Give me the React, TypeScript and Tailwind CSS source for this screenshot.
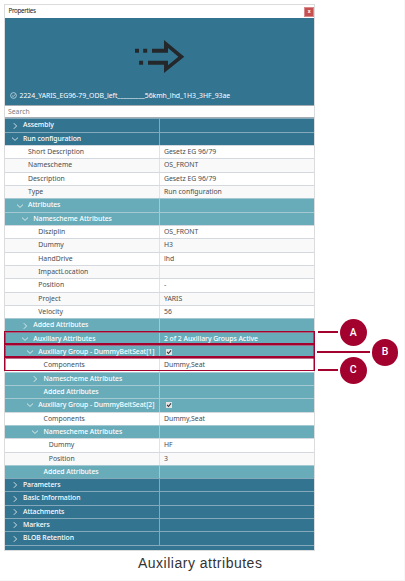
type Row = {
  label: string;
  depth: number;
  tone: "dark" | "teal" | "plain" | "alt";
  arrow?: "open" | "closed";
  value?: string;
  checked?: boolean;
};

const rows: Row[] = [
  { label: "Assembly", depth: 0, tone: "dark", arrow: "closed" },
  { label: "Run configuration", depth: 0, tone: "dark", arrow: "open" },
  { label: "Short Description", depth: 1, tone: "plain", value: "Gesetz EG 96/79" },
  { label: "Namescheme", depth: 1, tone: "alt", value: "OS_FRONT" },
  { label: "Description", depth: 1, tone: "plain", value: "Gesetz EG 96/79" },
  { label: "Type", depth: 1, tone: "alt", value: "Run configuration" },
  { label: "Attributes", depth: 1, tone: "teal", arrow: "open" },
  { label: "Namescheme Attributes", depth: 2, tone: "teal", arrow: "open" },
  { label: "Disziplin", depth: 3, tone: "plain", value: "OS_FRONT" },
  { label: "Dummy", depth: 3, tone: "alt", value: "H3" },
  { label: "HandDrive", depth: 3, tone: "plain", value: "lhd" },
  { label: "ImpactLocation", depth: 3, tone: "alt" },
  { label: "Position", depth: 3, tone: "plain", value: "-" },
  { label: "Project", depth: 3, tone: "alt", value: "YARIS" },
  { label: "Velocity", depth: 3, tone: "plain", value: "56" },
  { label: "Added Attributes", depth: 2, tone: "teal", arrow: "closed" },
  { label: "Auxiliary Attributes", depth: 2, tone: "teal", arrow: "open", value: "2 of 2 Auxiliary Groups Active" },
  { label: "Auxiliary Group - DummyBeltSeat[1]", depth: 3, tone: "teal", arrow: "open", checked: true },
  { label: "Components", depth: 4, tone: "plain", value: "Dummy,Seat" },
  { label: "Namescheme Attributes", depth: 4, tone: "teal", arrow: "closed" },
  { label: "Added Attributes", depth: 4, tone: "teal" },
  { label: "Auxiliary Group - DummyBeltSeat[2]", depth: 3, tone: "teal", arrow: "open", checked: true },
  { label: "Components", depth: 4, tone: "plain", value: "Dummy,Seat" },
  { label: "Namescheme Attributes", depth: 4, tone: "teal", arrow: "open" },
  { label: "Dummy", depth: 5, tone: "plain", value: "HF" },
  { label: "Position", depth: 5, tone: "alt", value: "3" },
  { label: "Added Attributes", depth: 4, tone: "teal" },
  { label: "Parameters", depth: 0, tone: "dark", arrow: "closed" },
  { label: "Basic Information", depth: 0, tone: "dark", arrow: "closed" },
  { label: "Attachments", depth: 0, tone: "dark", arrow: "closed" },
  { label: "Markers", depth: 0, tone: "dark", arrow: "closed" },
  { label: "BLOB Retention", depth: 0, tone: "dark", arrow: "closed" },
];

const tones = {
  dark: "bg-[#337491] text-white border-[#84a9bb] font-medium tracking-[-0.05px]",
  teal: "bg-[#68abb9] text-white border-[#a5c9d2] font-medium tracking-[-0.05px]",
  plain: "bg-white text-[#484d52] border-[#d4d9e0]",
  alt: "bg-[#f9f9f9] text-[#484d52] border-[#d4d9e0]",
};

const divider = {
  dark: "border-[#84a9bb]",
  teal: "border-[#a5c9d2]",
  plain: "border-[#e0e3e8]",
  alt: "border-[#e0e3e8]",
};

const indents = ["pl-[18px]", "pl-[23px]", "pl-[28.3px]", "pl-[33.3px]", "pl-[38.6px]", "pl-[43.8px]"];

function Chevron({ open }: { open: boolean }) {
  return (
    <svg viewBox="0 0 8 8" className="absolute -left-[12.5px] top-[2.3px] size-[8px]" fill="none" stroke="currentColor" strokeWidth=".75">
      <path d={open ? "M1 2.6 4 5.4 7 2.6" : "M2.8 1.2 5.6 4 2.8 6.8"} />
    </svg>
  );
}

function PropertyRow({ row }: { row: Row }) {
  return (
    <div className={`flex h-[13.34px] shrink-0 border-t leading-[12.6px] ${tones[row.tone]}`}>
      <div className={`w-[155px] shrink-0 border-r ${divider[row.tone]} ${indents[row.depth]}`}>
        <span className="relative block whitespace-nowrap">
          {row.arrow && <Chevron open={row.arrow === "open"} />}
          {row.label}
        </span>
      </div>
      <div className="whitespace-nowrap pl-[4px]">
        {row.checked ? (
          <svg viewBox="0 0 6 6" className="ml-[2px] mt-[3.2px] size-[6px]">
            <path d="M0 0H6V6H0Z" fill="#e4e4e4" />
            <path d="M1.1 2.9 2.5 4.5 5 1.3" fill="none" stroke="#333" strokeWidth="1.1" />
          </svg>
        ) : (
          <span className="block">{row.value}</span>
        )}
      </div>
    </div>
  );
}

function Outline({ place }: { place: string }) {
  return (
    <div className={`absolute left-[4px] w-[311px] border border-[#a3022e] shadow-[inset_1px_1px_0_0_#a3022e80,inset_-1px_0_0_0_#a3022e80] ${place}`} />
  );
}

function Marker({ letter, place }: { letter: string; place: string }) {
  return (
    <div className={`absolute flex size-[26.6px] items-center justify-center rounded-full bg-[#a3022e] font-['Roboto',sans-serif] text-[10.5px] font-medium text-white ${place}`}>
      {letter}
    </div>
  );
}

export default function App() {
  return (
    <div className="relative h-[581px] w-[405px] overflow-hidden border-b border-r border-[#f7f7f7] bg-white pl-[4px] pt-[4px] font-['Noto_Sans',sans-serif] text-[6.85px]">
      <div className="flex h-[547px] w-[311px] flex-col border border-[#dadcde] bg-[#337491]">
        <div className="flex h-[13px] shrink-0 items-center justify-between bg-white pl-[3.5px] text-[6.3px] tracking-[-0.35px] text-[#222]">
          <span className="-mt-[2px]">Properties</span>
          <span className="flex size-[10px] items-center justify-center border border-[#d9898b] bg-[#c64f52] text-[5px] font-bold text-white">x</span>
        </div>
        <div className="flex h-[87px] shrink-0 flex-col items-start">
          <svg viewBox="0 0 50 34" className="ml-[129.5px] mt-[22px] h-[34px] w-[50px]" fill="#25282b">
            <path d="M0 8.8h4v4H0zM8.2 8.8h4v4h-4zM4.1 20.7h4v4h-4z" />
            <path fillRule="evenodd" d="M17 8.8h12V0L49.3 16.7 29 33V24.7H13v-4h20v4.5L43.4 16.7 33 8v4.8H17z" />
          </svg>
          <div className="mt-[15.6px] flex items-center gap-[2.5px] pl-[5px] text-[6.85px] leading-[12px] text-white">
            <svg viewBox="0 0 8 8" className="size-[7px]" fill="none" stroke="currentColor" strokeWidth=".65">
              <circle cx="4" cy="4" r="3.3" />
              <path d="M2.4 4 3.7 5.3 6 2.7" />
            </svg>
            <span className="whitespace-nowrap">2224_YARIS_EG96-79_ODB_left_________56kmh_lhd_1H3_3HF_93ae</span>
          </div>
        </div>
        <div className="h-[13.3px] shrink-0 border-y border-[#a5adb3] bg-white pl-[3px] leading-[11px] text-[#7d7d7d]">Search</div>
        {rows.map((row, i) => (
          <PropertyRow key={i} row={row} />
        ))}
        <div className="w-full border-t border-[#84a9bb]" />
      </div>
      <div className="ml-[134px] mt-[3px] whitespace-nowrap font-['Liberation_Sans',Arial,sans-serif] text-[14px] leading-[18px] tracking-[0.5px] text-[#333]">
        Auxiliary attributes
      </div>

      <Outline place="top-[331px] h-[13px]" />
      <Outline place="top-[344px] h-[13px]" />
      <Outline place="top-[357px] h-[14px]" />
      <div className="absolute left-[318px] top-[331px] h-[2px] w-[20px] bg-[#a3022e]" />
      <div className="absolute left-[317px] top-[351px] h-[2px] w-[53px] bg-[#a3022e]" />
      <div className="absolute left-[318px] top-[369px] h-[2px] w-[20px] bg-[#a3022e]" />
      <Marker letter="A" place="left-[340px] top-[319.3px]" />
      <Marker letter="B" place="left-[371.7px] top-[339px]" />
      <Marker letter="C" place="left-[340px] top-[357px]" />
    </div>
  );
}
